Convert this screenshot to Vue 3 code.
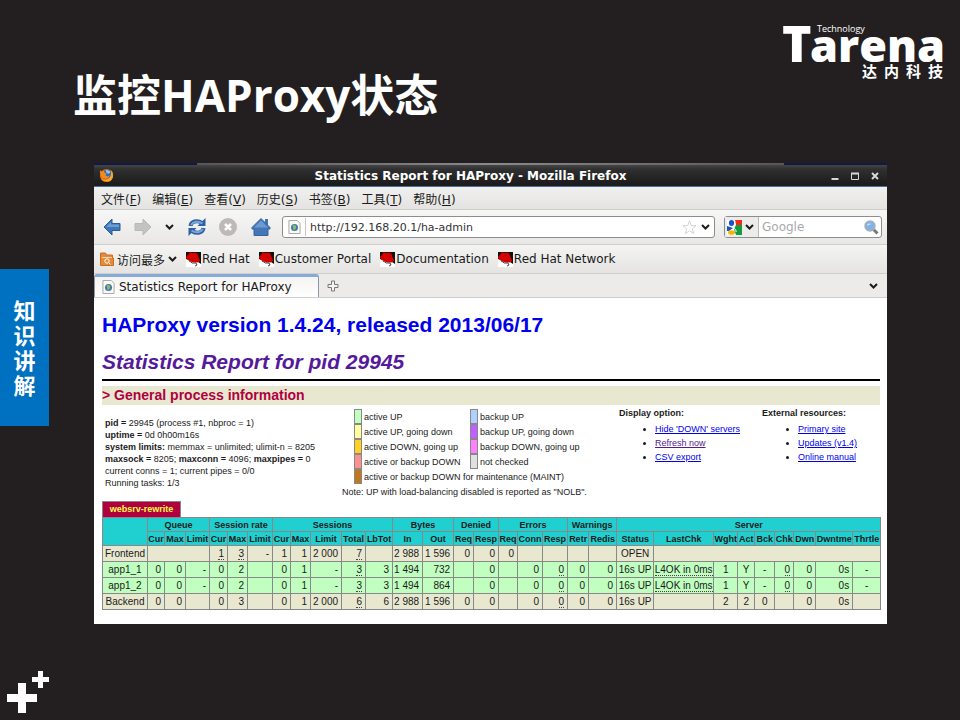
<script setup>
const menus = [
  ['文件', 'F'], ['编辑', 'E'], ['查看', 'V'], ['历史', 'S'], ['书签', 'B'], ['工具', 'T'], ['帮助', 'H'],
]
const bookmarks = ['Red Hat', 'Customer Portal', 'Documentation', 'Red Hat Network']

const legend = [
  ['#c0ffc0', 'active UP', '#b0d0ff', 'backup UP'],
  ['#ffffa0', 'active UP, going down', '#c060ff', 'backup UP, going down'],
  ['#ffd020', 'active DOWN, going up', '#ff80ff', 'backup DOWN, going up'],
  ['#ff9090', 'active or backup DOWN', '#e0e0e0', 'not checked'],
  ['#c07820', 'active or backup DOWN for maintenance (MAINT)'],
]

const groups = [
  ['Queue', 3], ['Session rate', 3], ['Sessions', 5], ['Bytes', 2], ['Denied', 2],
  ['Errors', 3], ['Warnings', 2], ['Server', 9],
]
const heads = [
  'Cur', 'Max', 'Limit', 'Cur', 'Max', 'Limit', 'Cur', 'Max', 'Limit', 'Total', 'LbTot', 'In', 'Out',
  'Req', 'Resp', 'Req', 'Conn', 'Resp', 'Retr', 'Redis', 'Status', 'LastChk', 'Wght', 'Act', 'Bck',
  'Chk', 'Dwn', 'Dwntme', 'Thrtle',
]
const widths = [
  45, 17, 21, 24, 18, 20, 25, 18, 20, 31, 24, 27, 30, 31, 20, 25, 19, 25, 25, 21, 28, 37, 60, 24, 17,
  20, 19, 22, 37, 28,
]

const server = (name, out) => ({
  name,
  kind: 'up',
  cells: ['0', '0', '-', '0', '2', '', '0', '1', '-', '~3', '3', '1 494', out, '', '0', '', '0', '~0',
    '0', '0', '16s UP', '~L4OK in 0ms', '1', 'Y', '-', '~0', '0', '0s', '-'],
})
const rows = [
  {
    name: 'Frontend',
    kind: 'total',
    cells: [{ span: 3 }, '~1', '~3', '-', '1', '1', '2 000', '~7', '', '2 988', '1 596', '0', '0', '0',
      '', '', '', '', 'OPEN', { span: 8 }],
  },
  server('app1_1', '732'),
  server('app1_2', '864'),
  {
    name: 'Backend',
    kind: 'total',
    cells: ['0', '0', '', '0', '3', '', '0', '1', '2 000', '~6', '6', '2 988', '1 596', '0', '0', '',
      '0', '~0', '0', '0', '16s UP', '', '2', '2', '0', '', '0', '0s', ''],
  },
]
const centered = (row, i) => (row.name === 'Frontend' ? i === 18 : (i >= 20 && i <= 24) || i === 28)
</script>

<template>
  <div class="slide">
    <header class="slide-head">
      <h1 class="slide-title">监控HAProxy状态</h1>
      <svg class="brand" viewBox="0 0 170 64" role="img" aria-label="Tarena Technology 达内科技">
        <g fill="#fff">
          <text x="4" y="42" class="brand-t">T</text>
          <text x="32" y="42" class="brand-w">arena</text>
          <text x="39" y="12" class="brand-s">Technology</text>
          <text y="57" x="84 106 128 150" class="brand-c">达内科技</text>
        </g>
      </svg>
    </header>

    <div class="stage">
      <aside class="side-tab">知<br>识<br>讲<br>解</aside>

      <main class="window">
        <div class="behind"></div>
        <div class="titlebar">
          <svg class="fox" viewBox="0 0 16 16" aria-hidden="true">
            <circle cx="8" cy="8" r="7" fill="#e66a12" />
            <circle cx="8.500" cy="6.500" r="4.600" fill="#2f6fb5" />
            <path d="M7 2c3 0 5 1 5 3l-2 1-2-1z" fill="#8fc7ee" />
            <path d="M1 2l2 2 2-1 1 2 2 1-1 2 2 1 2-1c0 3-3 4-5 3C3 11 1 8 1 2z" fill="#f28a1c" />
            <path d="M13 2c3 4 3 10-2 12-3 1-8 0-9-4 3 4 8 3 10-1 1-2 1-4 1-7z" fill="#f7a62a" />
          </svg>
          <span class="caption">Statistics Report for HAProxy - Mozilla Firefox</span>
          <div class="win-buttons">
            <button aria-label="Minimize"><svg viewBox="0 0 8 8"><path d="M0.500 7h7" /></svg></button>
            <button aria-label="Maximize"><svg viewBox="0 0 8 8"><path d="M0 1.500h8" /><path d="M0.500 1v6.500h7V1" stroke-width="1" /></svg></button>
            <button aria-label="Close"><svg viewBox="0 0 8 8"><path d="M1 1l6 6M7 1L1 7" /></svg></button>
          </div>
        </div>

        <nav class="menubar">
          <button v-for="m in menus" :key="m[1]">{{ m[0] }}(<u>{{ m[1] }}</u>)</button>
        </nav>

        <div class="navbar">
          <button aria-label="Back">
            <svg width="18" height="18" viewBox="0 0 18 18"><path d="M1 9l8-8v4.500h8v7H9V17z" fill="#3f76b8" stroke="#2b5c98" stroke-linejoin="round" /><path d="M3 9l5-5v2.500h8V9z" fill="#6d9dd2" /></svg>
          </button>
          <button class="fwd" aria-label="Forward">
            <svg width="18" height="18" viewBox="0 0 18 18"><path d="M17 9L9 1v4.500H1v7h8V17z" fill="#c3c3c3" stroke="#b9b9b9" stroke-linejoin="round" /></svg>
          </button>
          <button class="drop" aria-label="History list">
            <svg width="9" height="6" viewBox="0 0 9 6"><path d="M1 1l3.500 3.500L8 1" class="chev" /></svg>
          </button>
          <button class="reload" aria-label="Reload">
            <svg width="18" height="18" viewBox="0 0 18 18">
              <g fill="none" stroke="#2d61a3" stroke-width="4"><path d="M2.500 8C3 3.500 9 1.500 14 5" /><path d="M15.500 10C15 14.500 9 16.500 4 13" /></g>
              <g fill="#2d61a3"><path d="M17.500 0v8h-8z" /><path d="M0.500 18v-8h8z" /></g>
              <g fill="none" stroke="#79a6da" stroke-width="2"><path d="M3 7C5 3.500 10 2.500 14.500 5.500" /><path d="M15 11C13 14.500 8 15.500 3.500 12.500" /></g>
            </svg>
          </button>
          <button class="stop" aria-label="Stop">
            <svg width="20" height="20" viewBox="0 0 20 20"><circle cx="10" cy="10" r="9" fill="#bdb9b7" /><path d="M7 7l6 6M13 7l-6 6" stroke="#fff" stroke-width="2.500" /></svg>
          </button>
          <button class="home" aria-label="Home">
            <svg width="20" height="18" viewBox="0 0 20 18"><path d="M14 1h3v6h-3z" fill="#3f76b8" /><path d="M10 0.500L1 9.500V11h2v6.500h14V11h2V9.500z" fill="#4577b5" stroke="#34659f" /><path d="M10 2.500l-7 7h14z" fill="#6b9bd1" /></svg>
          </button>
          <div class="field address">
            <svg class="page" viewBox="0 0 14 15"><path d="M1 0.500h9l3 3v11H1z" fill="#fafafa" stroke="#a2a49f" /><circle cx="7" cy="8" r="3.800" fill="#4476b0" /><path d="M5 6l2-1 2 2-1 3-2 1z" fill="#8bbf5a" /></svg>
            <i class="rule"></i>
            <input type="text" aria-label="Address" value="http://192.168.20.1/ha-admin">
            <svg width="15" height="15" viewBox="0 0 16 16"><path d="M8 1l2 5h5l-4 3.500 1.500 5L8 11.500l-4.500 3 1.500-5L1 6h5z" fill="#fff" stroke="#d0d0d0" /></svg>
            <button aria-label="Show history"><svg width="9" height="6" viewBox="0 0 9 6"><path d="M1 1l3.500 3.500L8 1" class="chev" /></svg></button>
          </div>
          <div class="field search">
            <button class="engine" aria-label="Search engine">
              <svg width="15" height="15" viewBox="0 0 15 15"><path d="M0 0h15v15H0z" fill="#fff" /><path d="M8 0h7v5H9z" fill="#f02c16" /><path d="M9 5h6v10H9L7 9z" fill="#0f9d40" /><ellipse cx="4.500" cy="3" rx="2.600" ry="3" fill="#1c52c7" /><path d="M0 6l6 2-4 3H0z" fill="#1c52c7" /><ellipse cx="4.500" cy="12.500" rx="3.500" ry="2.300" fill="#f6b500" /><path d="M8 1c-1 2 1 3-1 5s3 3 2 6" fill="none" stroke="#fff" /></svg>
              <svg width="9" height="6" viewBox="0 0 9 6"><path d="M1 1l3.500 3.500L8 1" class="chev" /></svg>
            </button>
            <input type="text" aria-label="Search" placeholder="Google">
            <button aria-label="Go"><svg width="15" height="15" viewBox="0 0 15 15"><path d="M9.500 9.500l4 4" stroke="#777" stroke-width="3" /><circle cx="6" cy="6" r="5" fill="#7fb2ea" stroke="#a9aeb5" stroke-width="1.500" /><path d="M3 6c0-3 3-3 5-2-2 0-3 1-5 2z" fill="#d5e7fa" /></svg></button>
          </div>
        </div>

        <div class="bookmarks">
          <button class="often">
            <svg width="14" height="14" viewBox="0 0 14 14"><path d="M0.500 1h5l1 2h6v3h1v7.500h-13z" fill="#e58a3a" stroke="#cf6c1c" /><path d="M2 5.500h10" stroke="#fbd2a8" /><circle cx="7" cy="9" r="2.200" fill="none" stroke="#fff" /><path d="M9 11l1.500 1.500" stroke="#fff" /></svg>
            访问最多
            <svg width="9" height="6" viewBox="0 0 9 6"><path d="M1 1l3.500 3.500L8 1" class="chev" /></svg>
          </button>
          <a v-for="b in bookmarks" :key="b" href="#">
            <svg width="15" height="15" viewBox="0 0 15 15"><path d="M0 0h15v15H0z" fill="#fff" /><path d="M0 0h15v12l-3-2-4 0-8-3z" fill="#111" /><path d="M0 5c0-1 2-1 3-4 1-1 3 0 4 0s4-1 5 2c0 2 1 3 2 5 0 3-5 3-8 2C3 9 0 7 0 5z" fill="#d40000" /><path d="M3 9l2 1 1 1 4 0 1 2-2 1" fill="none" stroke="#444" /></svg>{{ b }}
          </a>
        </div>

        <div class="tabs">
          <div class="tab">
            <svg class="page" viewBox="0 0 14 15"><path d="M1 0.500h9l3 3v11H1z" fill="#fafafa" stroke="#a2a49f" /><circle cx="7" cy="8" r="3.800" fill="#4476b0" /><path d="M5 6l2-1 2 2-1 3-2 1z" fill="#8bbf5a" /></svg>
            Statistics Report for HAProxy
          </div>
          <button aria-label="New tab"><svg width="12" height="12" viewBox="0 0 12 12"><path d="M4.500 1h3v3.500H11v3H7.500V11h-3V7.500H1v-3h3.500z" fill="#f4f4f3" stroke="#777" /></svg></button>
          <button class="all-tabs" aria-label="All tabs"><svg width="9" height="6" viewBox="0 0 9 6"><path d="M1 1l3.500 3.500L8 1" class="chev" /></svg></button>
        </div>

        <article class="report">
          <h1>HAProxy version 1.4.24, released 2013/06/17</h1>
          <h2>Statistics Report for pid 29945</h2>
          <hr>
          <h3>&gt; General process information</h3>

          <section class="info">
            <p class="process">
              <b>pid = </b>29945 (process #1, nbproc = 1)<br>
              <b>uptime = </b>0d 0h00m16s<br>
              <b>system limits:</b> memmax = unlimited; ulimit-n = 8205<br>
              <b>maxsock = </b>8205; <b>maxconn = </b>4096; <b>maxpipes = </b>0<br>
              current conns = 1; current pipes = 0/0<br>
              Running tasks: 1/3
            </p>
            <div class="legend">
              <div class="keys">
                <template v-for="l in legend" :key="l[1]">
                  <i :style="{ background: l[0] }"></i>
                  <span :class="{ wide: !l[2] }">{{ l[1] }}</span>
                  <template v-if="l[2]">
                    <i :style="{ background: l[2] }"></i>
                    <span>{{ l[3] }}</span>
                  </template>
                </template>
              </div>
              <p>Note: UP with load-balancing disabled is reported as "NOLB".</p>
            </div>
            <div class="links">
              <b>Display option:</b>
              <ul>
                <li><a href="#">Hide 'DOWN' servers</a></li>
                <li><a href="#" class="seen">Refresh now</a></li>
                <li><a href="#">CSV export</a></li>
              </ul>
            </div>
            <div class="links">
              <b>External resources:</b>
              <ul>
                <li><a href="#">Primary site</a></li>
                <li><a href="#">Updates (v1.4)</a></li>
                <li><a href="#">Online manual</a></li>
              </ul>
            </div>
          </section>

          <div class="proxy-name">websrv-rewrite</div>
          <table class="stats">
            <colgroup>
              <col v-for="(w, i) in widths" :key="i" :style="{ width: w + 'px' }">
            </colgroup>
            <thead>
              <tr>
                <th rowspan="2"></th>
                <th v-for="g in groups" :key="g[0]" :colspan="g[1]">{{ g[0] }}</th>
              </tr>
              <tr>
                <th v-for="(h, i) in heads" :key="i">{{ h }}</th>
              </tr>
            </thead>
            <tbody>
              <tr v-for="r in rows" :key="r.name" :class="r.kind">
                <td class="mid">{{ r.name }}</td>
                <td
                  v-for="(c, i) in r.cells"
                  :key="i"
                  :colspan="c.span || 1"
                  :class="{ mid: centered(r, i) }"
                >
                  <template v-if="!c.span">
                    <span v-if="c[0] === '~'" class="hint">{{ c.slice(1) }}</span>
                    <template v-else>{{ c }}</template>
                  </template>
                </td>
              </tr>
            </tbody>
          </table>
        </article>
      </main>
    </div>

    <footer class="slide-foot">
      <svg width="42" height="43" viewBox="0 0 42 43" aria-hidden="true">
        <path d="M11 12h8v11h11v8H19v11h-8V31H0v-8h11z" fill="#fff" />
        <path d="M31 0h5v6h6v5h-6v6h-5v-6h-6V6h6z" fill="#fff" />
      </svg>
    </footer>
  </div>
</template>

<style>
body {
  background: #231f20;
}
</style>

<style scoped>
* {
  box-sizing: border-box;
}
.slide {
  min-height: 100vh;
  display: flex;
  flex-direction: column;
  background: #231f20;
  font-family: "DejaVu Sans", "Noto Sans CJK SC", sans-serif;
  font-size: 12px;
  color: #1a1a1a;
}
button {
  display: flex;
  align-items: center;
  padding: 0;
  border: 0;
  background: none;
  font: inherit;
  color: inherit;
}
svg {
  display: block;
  flex: none;
}
.slide-head {
  display: flex;
  justify-content: space-between;
  align-items: flex-start;
  height: 163px;
  padding: 20px 12px 0 73px;
}
.slide-title {
  margin: 43px 0 0;
  font: bold 44px/64px "Open Sans", "Noto Sans CJK SC", sans-serif;
  color: #fff;
}
.brand {
  width: 170px;
  height: 64px;
  overflow: visible;
}
.brand-t {
  font: 800 50px "Open Sans", sans-serif;
}
.brand-w {
  font: 800 45px "Open Sans", sans-serif;
}
.brand-s {
  font: 9px "Open Sans", sans-serif;
}
.brand-c {
  font: bold 15px "Noto Sans CJK SC", sans-serif;
}
.stage {
  display: flex;
  align-items: flex-start;
}
.side-tab {
  width: 49px;
  margin: 106px 45px 0 0;
  padding: 28px 0 29px;
  background: #0070c0;
  color: #fff;
  text-align: center;
  font: bold 22px/25px "Noto Sans CJK SC", sans-serif;
}
.window {
  flex: 1;
  min-width: 0;
  margin-right: 73px;
  background: #fff;
}
.behind {
  height: 2px;
  background: linear-gradient(90deg, #10184a 13%, #55555a 13%, #8a8a8c 50%, #55555a 87%, #10184a 87%);
}
.titlebar {
  display: flex;
  align-items: center;
  height: 22px;
  padding: 0 8px 0 5px;
  background: linear-gradient(#454545, #303030 20%, #1c1c1c 90%);
  border-bottom: 1px solid #4a6f9f;
  color: #fff;
  font-weight: bold;
}
.fox {
  width: 15px;
  height: 15px;
}
.caption {
  flex: 1;
  padding-right: 4px;
  text-align: center;
}
.win-buttons {
  display: flex;
  gap: 12px;
}
.win-buttons svg {
  width: 8px;
  height: 8px;
  fill: none;
  stroke: #d8d8d8;
  stroke-width: 2;
}
.menubar {
  display: flex;
  align-items: center;
  gap: 11px;
  height: 23px;
  padding: 0 7px;
  background: linear-gradient(#f0f0ef, #e4e3e1);
  border-bottom: 1px solid #cfcecc;
}
.menubar button {
  display: block;
  white-space: nowrap;
}
.navbar {
  display: flex;
  align-items: center;
  height: 35px;
  padding: 0 5px 0 9px;
  background: linear-gradient(#f7f7f6, #e8e7e5);
  border-bottom: 1px solid #cfcecc;
}
.fwd {
  margin-left: 13px;
}
.drop {
  margin-left: 13px;
}
.reload {
  margin-left: 14px;
}
.stop {
  margin-left: 12px;
}
.home {
  margin: 0 11px 0 13px;
}
.chev {
  fill: none;
  stroke: #1c1c1c;
  stroke-width: 2;
}
.field {
  display: flex;
  align-items: center;
  height: 22px;
  background: #fff;
  border: 1px solid #8d8d8b;
  border-radius: 3px;
}
.field input {
  flex: 1;
  min-width: 0;
  padding: 0;
  border: 0;
  outline: 0;
  background: none;
  font: inherit;
  color: #333;
}
.field input::placeholder {
  color: #a9a9a9;
  opacity: 1;
}
.address {
  flex: 1;
  gap: 4px;
  padding: 0 4px 0 5px;
}
.address input {
  font-size: 11px;
}
.rule {
  width: 1px;
  height: 18px;
  background: #c8c8c8;
}
.page {
  width: 13px;
  height: 14px;
}
.search {
  width: 158px;
  margin-left: 9px;
  padding-right: 2px;
}
.engine {
  gap: 3px;
  align-self: stretch;
  padding: 0 4px 0 2px;
  background: #ececeb;
  border-right: 1px solid #b9b9b7;
}
.search input {
  padding-left: 3px;
}
.bookmarks {
  display: flex;
  align-items: center;
  gap: 9px;
  height: 29px;
  padding: 0 6px;
  background: linear-gradient(#f4f4f3, #e5e4e2);
  border-bottom: 1px solid #cfcecc;
}
.bookmarks a {
  display: flex;
  align-items: center;
  gap: 1px;
  color: inherit;
  text-decoration: none;
  white-space: nowrap;
}
.often {
  gap: 3px;
}
.tabs {
  display: flex;
  align-items: center;
  height: 24px;
  padding-right: 9px;
  background: #ecebea;
  border-bottom: 1px solid #cfcecc;
}
.tab {
  display: flex;
  align-items: center;
  gap: 4px;
  align-self: stretch;
  width: 225px;
  margin-right: 8px;
  padding-left: 7px;
  background: linear-gradient(#f3f3f2, #fff);
  border: 1px solid #8c97a8;
  border-top: 3px solid #86abd9;
  border-bottom: 0;
  border-radius: 3px 3px 0 0;
  white-space: nowrap;
}
.all-tabs {
  margin-left: auto;
}
.report {
  padding: 14px 7px 14px 8px;
  font-family: "Liberation Sans", sans-serif;
  font-size: 9px;
}
.report h1,
.report h2 {
  margin: 0;
  font-size: 21px;
  line-height: 26px;
  color: #0000ee;
}
.report h2 {
  margin-top: 11px;
  color: #551a9b;
  font-style: italic;
}
hr {
  height: 2px;
  margin: 4px 0 5px;
  border: 0;
  background: #000;
}
.report h3 {
  margin: 0;
  background: #e8e8d0;
  color: #b00040;
  font-size: 14px;
  line-height: 19px;
}
.info {
  display: grid;
  grid-template-columns: 240fr 277fr 143fr 118fr;
  height: 96px;
  white-space: nowrap;
}
.info p {
  margin: 0;
  line-height: 12px;
}
.info .process {
  padding: 12px 0 0 3px;
}
.legend {
  padding-top: 4px;
}
.keys {
  display: grid;
  grid-template-columns: 8px 108px 8px 1fr;
  grid-auto-rows: 15px;
  align-items: center;
  margin: 0 0 2px 12px;
}
.keys i {
  align-self: stretch;
  border: 1px solid #888;
}
.keys span {
  padding-left: 2px;
}
.keys .wide {
  grid-column: 2 / 5;
}
.links ul {
  margin: 0;
  padding: 2px 0 0 36px;
}
.links b {
  display: block;
  padding-top: 2px;
  line-height: 13px;
}
.links li {
  line-height: 14px;
}
.links a {
  color: #0000ee;
}
.links .seen {
  color: #551a8b;
}
.proxy-name {
  width: 79px;
  height: 16px;
  border: 1px solid #888;
  border-bottom: 0;
  background: #b00040;
  color: #ffff40;
  font-weight: bold;
  line-height: 15px;
  text-align: center;
}
.stats {
  width: 100%;
  table-layout: fixed;
  border-collapse: collapse;
  white-space: nowrap;
}
.stats th,
.stats td {
  border: 1px solid #888;
  padding: 0 3px 0 0;
  height: 16px;
  font-size: 10px;
  line-height: 12px;
  text-align: right;
}
.stats th {
  height: 14px;
  padding: 0;
  background: #20d0d0;
  font-size: 9px;
  text-align: center;
}
.stats .mid {
  padding: 0;
  text-align: center;
}
.total {
  background: #e8e8d0;
}
.up {
  background: #c0ffc0;
}
.hint {
  border-bottom: 1px dotted #444;
}
.slide-foot {
  margin-top: auto;
  padding: 0 0 6px 7px;
}
</style>
